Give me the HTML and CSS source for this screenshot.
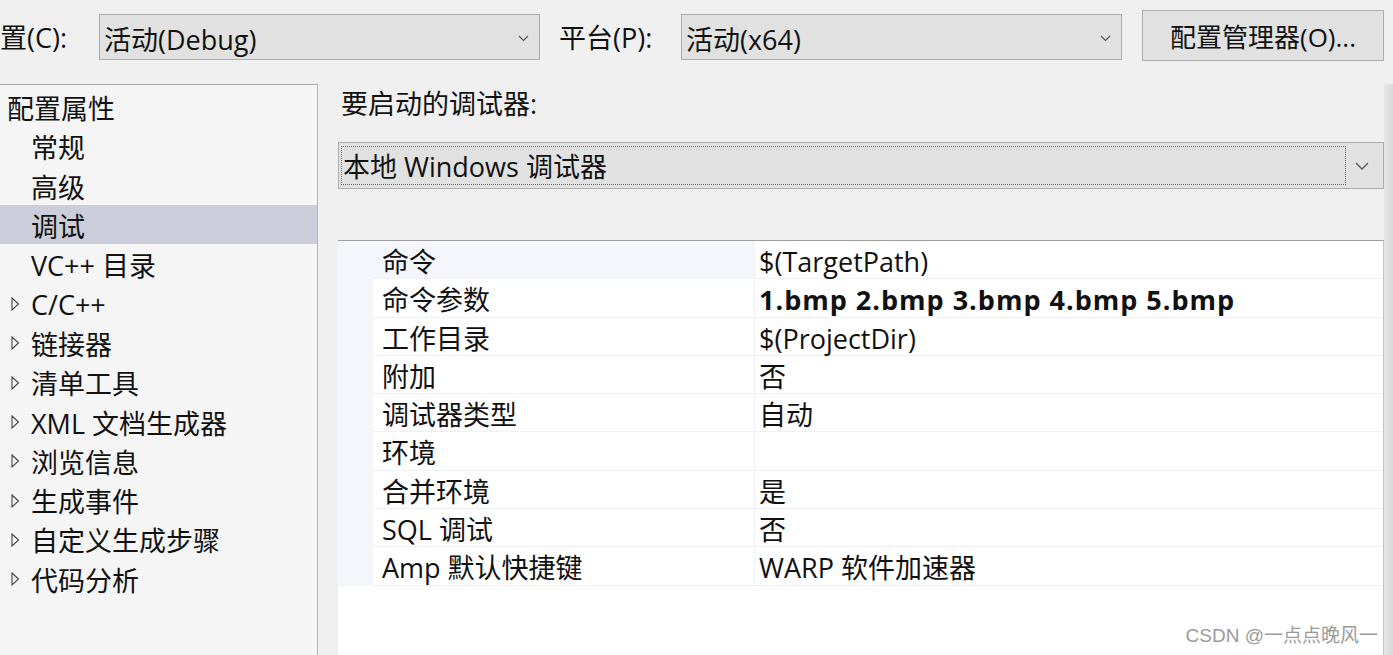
FILE: index.html
```html
<!DOCTYPE html>
<html lang="zh-CN">
<head>
    <meta charset="UTF-8">
    <title>调试 属性页</title>
    <link rel="stylesheet" href="styles.css">
</head>
<body>
    <div class="toolbar">
        <span class="label label-config">置(C):</span>
        <div class="combo combo-config">
            <span>活动(Debug)</span>
            <svg class="chevron" width="11" height="7" viewBox="0 0 11 7"><path d="M1 1 L5.5 5.5 L10 1" fill="none" stroke="#555" stroke-width="1.2"/></svg>
        </div>
        <span class="label label-platform">平台(P):</span>
        <div class="combo combo-platform">
            <span>活动(x64)</span>
            <svg class="chevron" width="11" height="7" viewBox="0 0 11 7"><path d="M1 1 L5.5 5.5 L10 1" fill="none" stroke="#555" stroke-width="1.2"/></svg>
        </div>
        <button class="manager-btn">配置管理器(O)...</button>
    </div>

    <div class="main">
        <!-- arbre des catégories -->
        <div class="tree">
            <div class="tree-row root">配置属性</div>
            <div class="tree-row child">常规</div>
            <div class="tree-row child">高级</div>
            <div class="tree-row child selected">调试</div>
            <div class="tree-row child">VC++ 目录</div>
            <div class="tree-row child"><svg class="arrow" width="9" height="14" viewBox="0 0 9 14"><path d="M1 1 L7.5 7 L1 13 Z" fill="none" stroke="#444" stroke-width="1.1"/></svg>C/C++</div>
            <div class="tree-row child"><svg class="arrow" width="9" height="14" viewBox="0 0 9 14"><path d="M1 1 L7.5 7 L1 13 Z" fill="none" stroke="#444" stroke-width="1.1"/></svg>链接器</div>
            <div class="tree-row child"><svg class="arrow" width="9" height="14" viewBox="0 0 9 14"><path d="M1 1 L7.5 7 L1 13 Z" fill="none" stroke="#444" stroke-width="1.1"/></svg>清单工具</div>
            <div class="tree-row child"><svg class="arrow" width="9" height="14" viewBox="0 0 9 14"><path d="M1 1 L7.5 7 L1 13 Z" fill="none" stroke="#444" stroke-width="1.1"/></svg>XML 文档生成器</div>
            <div class="tree-row child"><svg class="arrow" width="9" height="14" viewBox="0 0 9 14"><path d="M1 1 L7.5 7 L1 13 Z" fill="none" stroke="#444" stroke-width="1.1"/></svg>浏览信息</div>
            <div class="tree-row child"><svg class="arrow" width="9" height="14" viewBox="0 0 9 14"><path d="M1 1 L7.5 7 L1 13 Z" fill="none" stroke="#444" stroke-width="1.1"/></svg>生成事件</div>
            <div class="tree-row child"><svg class="arrow" width="9" height="14" viewBox="0 0 9 14"><path d="M1 1 L7.5 7 L1 13 Z" fill="none" stroke="#444" stroke-width="1.1"/></svg>自定义生成步骤</div>
            <div class="tree-row child"><svg class="arrow" width="9" height="14" viewBox="0 0 9 14"><path d="M1 1 L7.5 7 L1 13 Z" fill="none" stroke="#444" stroke-width="1.1"/></svg>代码分析</div>
        </div>

        <div class="content">
            <div class="debugger-label">要启动的调试器:</div>
            <div class="debugger-combo">
                <div class="focus-rect">本地 Windows 调试器</div>
                <svg class="chevron-big" width="14" height="8" viewBox="0 0 14 8"><path d="M1 1 L7 7 L13 1" fill="none" stroke="#555" stroke-width="1.3"/></svg>
            </div>

            <div class="grid">
                <div class="grid-row current"><div class="margin"></div><div class="name">命令</div><div class="value">$(TargetPath)</div></div>
                <div class="grid-row"><div class="margin"></div><div class="name">命令参数</div><div class="value bold">1.bmp 2.bmp 3.bmp 4.bmp 5.bmp</div></div>
                <div class="grid-row"><div class="margin"></div><div class="name">工作目录</div><div class="value">$(ProjectDir)</div></div>
                <div class="grid-row"><div class="margin"></div><div class="name">附加</div><div class="value">否</div></div>
                <div class="grid-row"><div class="margin"></div><div class="name">调试器类型</div><div class="value">自动</div></div>
                <div class="grid-row"><div class="margin"></div><div class="name">环境</div><div class="value"></div></div>
                <div class="grid-row"><div class="margin"></div><div class="name">合并环境</div><div class="value">是</div></div>
                <div class="grid-row"><div class="margin"></div><div class="name">SQL 调试</div><div class="value">否</div></div>
                <div class="grid-row"><div class="margin"></div><div class="name">Amp 默认快捷键</div><div class="value">WARP 软件加速器</div></div>
            </div>
        </div>
        <div class="edge"></div>
    </div>

    <div class="watermark">CSDN @一点点晚风一</div>
</body>
</html>
```

FILE: styles.css
```css
body {
    margin: 0;
    width: 1393px;
    height: 655px;
    overflow: hidden;
    background-color: #f0f0f0;
    font-family: "Open Sans", "Noto Sans CJK SC", sans-serif;
    font-size: 27px;
    color: #111;
    position: relative;
}

/* barre du haut */
.toolbar {
    display: flex;
    align-items: flex-start;
    height: 84px;
    box-sizing: border-box;
    padding-top: 14px;
}
.label {
    height: 46px;
    line-height: 48px;
    white-space: nowrap;
}
.label-config {
    width: 99px;
}
.label-platform {
    margin-left: 19px;
    width: 122px;
}
.combo {
    display: flex;
    align-items: center;
    justify-content: space-between;
    height: 46px;
    box-sizing: border-box;
    border: 1px solid #adadad;
    background-color: #e1e1e1;
    padding: 2px 10px 0 4px;
}
.combo-config {
    width: 441px;
}
.combo-platform {
    width: 441px;
}
.manager-btn {
    margin-left: 20px;
    margin-top: -4px;
    width: 242px;
    height: 51px;
    border: 1px solid #adadad;
    background-color: #e1e1e1;
    font-family: inherit;
    font-size: 26px;
    color: #111;
    padding: 0;
}

.main {
    display: flex;
    height: 571px;
}

/* arbre de gauche */
.tree {
    width: 318px;
    box-sizing: border-box;
    border-top: 1px solid #a8a8a8;
    border-right: 1px solid #b4b4b4;
    background-color: #f5f5f5;
    padding-top: 2px;
}
.tree-row {
    display: flex;
    align-items: center;
    height: 39.3px;
    padding-top: 2px;
    box-sizing: border-box;
    white-space: nowrap;
}
.tree-row.root {
    padding-left: 7px;
}
.tree-row.child {
    padding-left: 31px;
}
.tree-row.child .arrow {
    flex-shrink: 0;
    margin-left: -20px;
    margin-right: 11px;
}
.tree-row.selected {
    background-color: #cbcdda;
}

/* partie droite */
.content {
    flex: 1;
    padding-left: 20px;
    display: flex;
    flex-direction: column;
}
.debugger-label {
    height: 40px;
    line-height: 40px;
    padding-left: 3px;
}
.debugger-combo {
    margin-top: 18px;
    height: 47px;
    box-sizing: border-box;
    border: 1px solid #adadad;
    background-color: #e1e1e1;
    display: flex;
    align-items: center;
    padding: 3px 0 3px 2px;
}
.focus-rect {
    flex: 1;
    height: 100%;
    box-sizing: border-box;
    border: 1px dotted #666;
    line-height: 39px;
    padding-left: 1px;
}
.chevron-big {
    margin: 0 14px 0 9px;
}

.grid {
    margin-top: 51px;
    flex: 1;
    background-color: white;
    border-top: 1px solid #a0a0a0;
    border-right: 1px solid #c4c4c4;
}
.grid-row {
    display: flex;
    height: 38.3px;
}
.margin {
    width: 35px;
    background-color: #f5f6fb;
}
.name {
    width: 382px;
    box-sizing: border-box;
    padding: 3px 0 0 9px;
    line-height: 35px;
    border-bottom: 1px solid #f0f1f8;
    border-right: 1px solid #f0f1f8;
    white-space: nowrap;
}
.grid-row.current .name {
    background-color: #f5f6fb;
}
.value {
    flex: 1;
    box-sizing: border-box;
    padding: 3px 0 0 4px;
    line-height: 35px;
    border-bottom: 1px solid #f0f1f8;
    white-space: nowrap;
}
.value.bold {
    font-weight: bold;
    letter-spacing: 1px;
}

.edge {
    width: 9px;
    background: linear-gradient(to right, #e6e6e6, #dadada);
}

.watermark {
    position: absolute;
    right: 15px;
    bottom: 8px;
    font-family: "Liberation Sans", "Noto Sans CJK SC", sans-serif;
    font-size: 19px;
    color: #9a9a9a;
}
```
